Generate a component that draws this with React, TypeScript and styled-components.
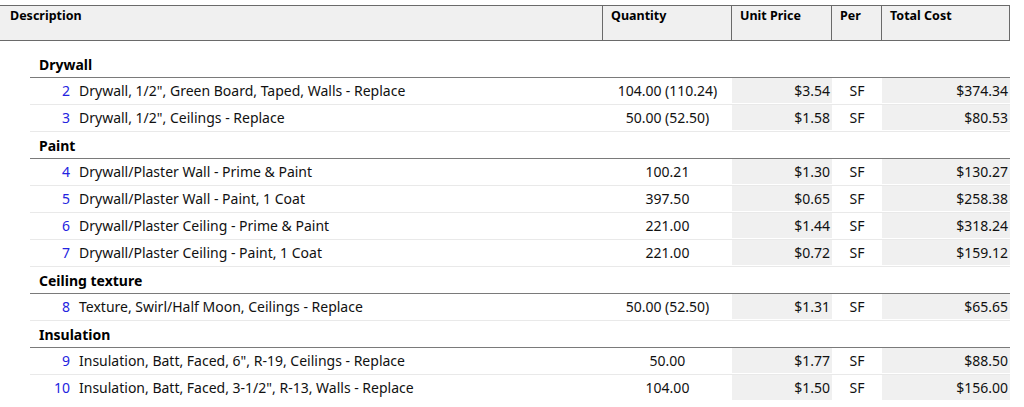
import React from "react";
import styled, { createGlobalStyle } from "styled-components";

const Global = createGlobalStyle`
  html, body { margin: 0; padding: 0; background: #fff; }
  body { font-family: "Segoe UI", "Noto Sans", "Open Sans", sans-serif; color: #111; }
`;

const Table = styled.div`
  width: 1010px;
  margin-top: 5px;
`;

const HeaderRow = styled.div`
  display: grid;
  grid-template-columns: 603px 129px 100px 50px 128px;
  height: 34px;
  background: #f0f0f0;
  border-top: 1px solid #6a6a6a;
  border-bottom: 1px solid #6a6a6a;
`;

const HeaderCell = styled.div<{ $pl?: number }>`
  border-right: 1px solid #6a6a6a;
  padding: 2px 0 0 ${(p) => p.$pl ?? 8}px;
  font-weight: 700;
  font-size: 12.5px;
  line-height: 16px;
  color: #000;
`;

const Body = styled.div`
  padding: 10px 0 0 30px;
`;

const GroupRow = styled.div`
  height: 26px;
  display: flex;
  align-items: center;
  padding-left: 9px;
  border-bottom: 1px solid #7a7a7a;
  font-weight: 700;
  font-size: 14px;
  color: #000;
`;

const ItemRow = styled.div<{ $last?: boolean }>`
  display: grid;
  grid-template-columns: 573px 129px 100px 50px 128px;
  height: 26px;
  border-bottom: 1px solid ${(p) => (p.$last ? "transparent" : "#e9e9e9")};
  font-size: 14px;
  line-height: 24px;
  color: #111;
`;

const DescCell = styled.div`
  display: flex;
  align-items: center;
  gap: 9px;
`;

const Num = styled.span`
  width: 40px;
  text-align: right;
  color: #2323e0;
`;

const Desc = styled.span`
  color: #111;
`;

const QtyCell = styled.div`
  display: flex;
  align-items: center;
  justify-content: center;
`;

const MoneyCell = styled.div<{ $pr?: number }>`
  background: #f0f0f0;
  margin: 0 0 1px 0;
  padding-right: ${(p) => p.$pr ?? 2}px;
  display: flex;
  align-items: center;
  justify-content: flex-end;
`;

const PerCell = styled.div`
  display: flex;
  align-items: center;
  justify-content: center;
`;

type Item = { n: number; d: string; q: string; u: string; t: string };
type Group = { name: string; items: Item[] };

const groups: Group[] = [
  {
    name: "Drywall",
    items: [
      { n: 2, d: 'Drywall, 1/2", Green Board, Taped, Walls - Replace', q: "104.00 (110.24)", u: "$3.54", t: "$374.34" },
      { n: 3, d: 'Drywall, 1/2", Ceilings - Replace', q: "50.00 (52.50)", u: "$1.58", t: "$80.53" },
    ],
  },
  {
    name: "Paint",
    items: [
      { n: 4, d: "Drywall/Plaster Wall - Prime & Paint", q: "100.21", u: "$1.30", t: "$130.27" },
      { n: 5, d: "Drywall/Plaster Wall - Paint, 1 Coat", q: "397.50", u: "$0.65", t: "$258.38" },
      { n: 6, d: "Drywall/Plaster Ceiling - Prime & Paint", q: "221.00", u: "$1.44", t: "$318.24" },
      { n: 7, d: "Drywall/Plaster Ceiling - Paint, 1 Coat", q: "221.00", u: "$0.72", t: "$159.12" },
    ],
  },
  {
    name: "Ceiling texture",
    items: [
      { n: 8, d: "Texture, Swirl/Half Moon, Ceilings - Replace", q: "50.00 (52.50)", u: "$1.31", t: "$65.65" },
    ],
  },
  {
    name: "Insulation",
    items: [
      { n: 9, d: 'Insulation, Batt, Faced, 6", R-19, Ceilings - Replace', q: "50.00", u: "$1.77", t: "$88.50" },
      { n: 10, d: 'Insulation, Batt, Faced, 3-1/2", R-13, Walls - Replace', q: "104.00", u: "$1.50", t: "$156.00" },
    ],
  },
];

export default function App() {
  return (
    <>
      <Global />
      <Table>
        <HeaderRow>
          <HeaderCell $pl={10}>Description</HeaderCell>
          <HeaderCell>Quantity</HeaderCell>
          <HeaderCell>Unit Price</HeaderCell>
          <HeaderCell>Per</HeaderCell>
          <HeaderCell>Total Cost</HeaderCell>
        </HeaderRow>
        <Body>
          {groups.map((g, gi) => (
            <React.Fragment key={g.name}>
              <GroupRow>{g.name}</GroupRow>
              {g.items.map((it, ii) => (
                <ItemRow key={it.n} $last={gi === groups.length - 1 && ii === g.items.length - 1}>
                  <DescCell>
                    <Num>{it.n}</Num>
                    <Desc>{it.d}</Desc>
                  </DescCell>
                  <QtyCell>{it.q}</QtyCell>
                  <MoneyCell>{it.u}</MoneyCell>
                  <PerCell>SF</PerCell>
                  <MoneyCell>{it.t}</MoneyCell>
                </ItemRow>
              ))}
            </React.Fragment>
          ))}
        </Body>
      </Table>
    </>
  );
}
